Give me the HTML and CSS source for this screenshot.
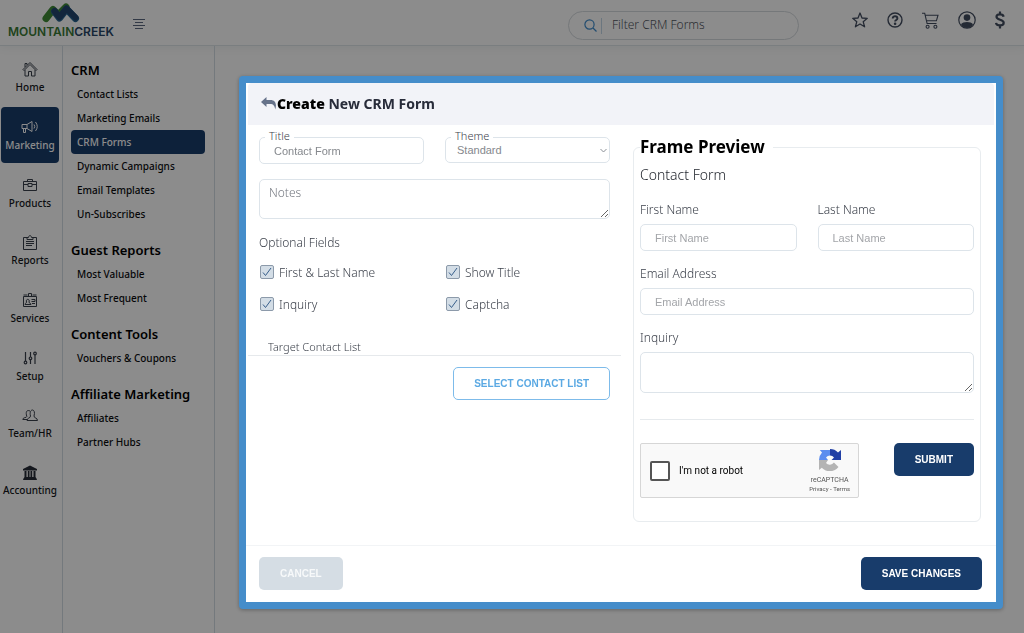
FILE: index.html
```
<!DOCTYPE html>
<html lang="en">
<head>
    <meta charset="UTF-8">
    <meta name="viewport" content="width=device-width, initial-scale=1.0">
    <title>CRM Forms - Mountain Creek</title>
    <link rel="stylesheet" href="styles.css">
</head>
<body>
    <header class="topbar">
        <a href="#" class="logo">
            <svg width="40" height="20" viewBox="0 0 40 20" fill="none" stroke-linecap="round" stroke-linejoin="round" stroke-width="7">
                <path d="M5 15.500L12 6.500l4 4" stroke="#3f8a36"/>
                <path d="M20 9l5-5" stroke="#3f8a36"/>
                <path d="M13.500 8.500l5 6.500 7-9 9 9.500" stroke="#27638f"/>
                <path d="M13.500 8l5 6 7-8.500 9 9" stroke="#23466e" stroke-width="6"/>
            </svg>
            <span class="logo-text"><span class="green">MOUNTAIN</span>CREEK</span>
        </a>
        <button type="button" class="menu-toggle" aria-label="Toggle menu">
            <svg width="12" height="10" viewBox="0 0 12 10" stroke="#5b6880" fill="none">
                <path d="M0 .5h12M2 3.500h8M0 6.500h12M2 9.500h8"/>
            </svg>
        </button>
        <form class="search">
            <svg width="13" height="13" viewBox="0 0 13 13" fill="none" stroke="#3e8ccc" stroke-width="1.2">
                <circle cx="5.500" cy="5.500" r="4.600"/><path d="M9 9l3.500 3.500"/>
            </svg>
            <input type="text" placeholder="Filter CRM Forms" aria-label="Filter CRM Forms">
        </form>
        <nav class="tools">
            <a href="#" aria-label="Favorites">
                <svg width="16" height="16" viewBox="0 0 16 16" fill="none" stroke="#434d60" stroke-width="1.3" stroke-linejoin="round"><path d="M8 1l2 5 5.300.3-4.100 3.400 1.400 5.100L8 12l-4.600 2.800 1.400-5.100L.7 6.300 6 6z"/></svg>
            </a>
            <a href="#" aria-label="Help">
                <svg width="16" height="16" viewBox="0 0 16 16" fill="none" stroke="#434d60" stroke-width="1.4"><circle cx="8" cy="8" r="7"/><path d="M5.700 6.500c0-3 4.700-2.900 4.700 0 0 1.500-2.300 1.500-2.300 3" stroke-width="1.900"/><circle cx="8.100" cy="11.800" r=".6" fill="#434d60"/></svg>
            </a>
            <a href="#" aria-label="Cart">
                <svg width="17" height="17" viewBox="0 0 17 17" fill="none" stroke="#434d60" stroke-width="1.1"><path d="M0 1.200h2.700l2.400 10.300h9.400M3.200 3.200h12.800l-1.600 5.600H4.600"/><circle cx="5.600" cy="14.700" r="1.500"/><circle cx="13.400" cy="14.700" r="1.500"/></svg>
            </a>
            <a href="#" aria-label="Account">
                <svg width="18" height="18" viewBox="0 0 18 18"><circle cx="9" cy="9" r="8.200" fill="none" stroke="#434d60" stroke-width="1.200"/><circle cx="9" cy="6.600" r="3.300" fill="#434d60"/><path d="M3 13.200c2-3 10-3 12 0-2.500 5-9.500 5-12 0z" fill="#434d60"/></svg>
            </a>
            <a href="#" aria-label="Billing">
                <svg width="10" height="18" viewBox="0 0 10 18" fill="none" stroke="#434d60" stroke-width="2.200"><path d="M8.600 5.700C8 2.500 1.500 2.700 1.500 5.800c0 3.500 7.200 2.400 7.200 5.900 0 3.600-7.200 3.600-7.700.2M5 .5v3M5 14.500v3"/></svg>
            </a>
        </nav>
    </header>

    <div class="layout">
        <nav class="rail">
            <a href="#">
                <svg width="16" height="16" viewBox="0 0 16 16" fill="none" stroke="#3a404c"><path d="M1 8.500l7-7 7 7-1 1-6-6-6 6zM3 9v6h3.500v-4.500h3V15H13V9M3 6V2.500h2V4"/></svg>
                Home
            </a>
            <a href="#" class="active">
                <svg width="18" height="16" viewBox="0 0 18 16" fill="none" stroke="#fff"><path d="M1 5.500h5l5-3v10l-5-3H1zM6 5.500v4M2.500 9.500v4h2v-4M13 5.500q1.500 2 0 4M14.500 3q3.500 4.500 0 9"/></svg>
                Marketing
            </a>
            <a href="#">
                <svg width="16" height="16" viewBox="0 0 16 16" fill="none" stroke="#3a404c"><path d="M1.500 4.500h13v9h-13zM5.500 4.500v-2h5v2M1.500 7.500H6M10 7.500h4.500M6 6.500h4v3H6z"/></svg>
                Products
            </a>
            <a href="#">
                <svg width="14" height="15" viewBox="0 0 14 15" fill="none" stroke="#3a404c"><path d="M4 2.500H.5v12h13v-12H10M4 4.500h6v-2H8.500C8.500 0 5.500 0 5.500 2.500H4zM3 6.500h8M3 8.500h8M3 10.500h6"/></svg>
                Reports
            </a>
            <a href="#">
                <svg width="16" height="16" viewBox="0 0 16 16" fill="none" stroke="#3a404c"><path d="M1.500 4.500h13v10h-13zM1.500 3h4M10.500 3h4M6.500 1.500h3v3h-3zM3 12.500h6c0-1.500-2-1-2-2.500 1.500-3-3.500-4-2.500 0 0 1.500-1.500 1-1.500 2.500zM9.500 7.500H13v2H9.500M10 11.500h3"/></svg>
                Services
            </a>
            <a href="#">
                <svg width="14" height="16" viewBox="0 0 14 16" fill="none" stroke="#3a404c" stroke-width="1.200"><path d="M2.500 2v9M7.500 2v5M7.500 9.500V14M12 5v9"/><circle cx="2.500" cy="12.500" r="1.300"/><circle cx="7.500" cy="8.300" r="1.300"/><circle cx="12" cy="3.500" r="1.300"/></svg>
                Setup
            </a>
            <a href="#">
                <svg width="16" height="15" viewBox="0 0 16 15" fill="none" stroke="#3a404c"><path d="M5 12.500h10.500c0-3-3.500-2-3.500-4.500 2.500-8-5.500-8-3.500 0 0 2.500-3.500 1.500-3.500 4.500zM8 3C4.500 1.500 3.500 4 4.800 8.500c0 1.500-4 .5-4 3H5"/></svg>
                Team/HR
            </a>
            <a href="#">
                <svg width="16" height="15" viewBox="0 0 16 15" fill="#252a35"><path d="M8 .5l7 3.500v1.500H1V4zM2.500 6h2v6h1.300V6h1.700v6h1V6h1.700v6h1.300V6h2v6l1 1.500.5 1.500H1l.5-1.500 1-1.500z"/></svg>
                Accounting
            </a>
        </nav>

        <nav class="subnav">
            <h3>CRM</h3>
            <ul>
                <li><a href="#">Contact Lists</a></li>
                <li><a href="#">Marketing Emails</a></li>
                <li><a href="#" class="active">CRM Forms</a></li>
                <li><a href="#">Dynamic Campaigns</a></li>
                <li><a href="#">Email Templates</a></li>
                <li><a href="#">Un-Subscribes</a></li>
            </ul>
            <h3>Guest Reports</h3>
            <ul>
                <li><a href="#">Most Valuable</a></li>
                <li><a href="#">Most Frequent</a></li>
            </ul>
            <h3>Content Tools</h3>
            <ul>
                <li><a href="#">Vouchers &amp; Coupons</a></li>
            </ul>
            <h3>Affiliate Marketing</h3>
            <ul>
                <li><a href="#">Affiliates</a></li>
                <li><a href="#">Partner Hubs</a></li>
            </ul>
        </nav>
    </div>

    <div class="overlay">
        <div class="modal" role="dialog" aria-labelledby="modalTitle">
            <div class="modal-header">
                <svg width="15" height="13" viewBox="0 0 15 13" fill="#66728a"><path d="M0 5L5.500 0v3h4c5 0 6.500 4 4.700 9.500C13.800 9 12.500 7 9 7H5.500v3z"/></svg>
                <h2 id="modalTitle"><b>Create</b> New CRM Form</h2>
            </div>

            <div class="modal-body">
                <form class="settings">
                    <div class="row">
                        <div class="outlined">
                            <label for="title">Title</label>
                            <input type="text" id="title" placeholder="Contact Form">
                        </div>
                        <div class="outlined">
                            <label for="theme">Theme</label>
                            <select id="theme"><option>Standard</option></select>
                            <svg class="chevron" width="7" height="5" viewBox="0 0 7 5" fill="none" stroke="#8a8f96"><path d="M.5 1l3 3 3-3"/></svg>
                        </div>
                    </div>
                    <textarea class="notes" placeholder="Notes" aria-label="Notes"></textarea>
                    <p class="group-title">Optional Fields</p>
                    <div class="row checks">
                        <label><input type="checkbox" checked>First &amp; Last Name</label>
                        <label><input type="checkbox" checked>Show Title</label>
                        <label><input type="checkbox" checked>Inquiry</label>
                        <label><input type="checkbox" checked>Captcha</label>
                    </div>
                    <p class="target">Target Contact List</p>
                    <button type="button" class="btn btn-outline">SELECT CONTACT LIST</button>
                </form>

                <form class="preview">
                    <fieldset>
                        <legend>Frame Preview</legend>
                        <h4>Contact Form</h4>
                        <div class="row">
                            <div class="field">
                                <label for="first">First Name</label>
                                <input type="text" id="first" placeholder="First Name">
                            </div>
                            <div class="field">
                                <label for="last">Last Name</label>
                                <input type="text" id="last" placeholder="Last Name">
                            </div>
                        </div>
                        <div class="field">
                            <label for="email">Email Address</label>
                            <input type="email" id="email" placeholder="Email Address">
                        </div>
                        <div class="field">
                            <label for="inquiry">Inquiry</label>
                            <textarea id="inquiry"></textarea>
                        </div>
                        <hr>
                        <div class="submit-row">
                            <div class="captcha">
                                <label><input type="checkbox">I'm not a robot</label>
                                <div class="captcha-brand">
                                    <svg width="22" height="22" viewBox="0 0 22 22">
                                        <path d="M0 11A11 11 0 0 1 3 3.400L.8 1H11v5.500A5 5 0 0 0 7 8.500L9 11z" fill="#5b8def"/>
                                        <path d="M11 0a11 11 0 0 1 8 3.400L22 1v10H12.500l2.500-2.600A5 5 0 0 0 11 6.500z" fill="#213fa5"/>
                                        <path d="M0 11v10l2.800-2.200A11 11 0 0 0 19.500 18l-4.600-4.500A5 5 0 0 1 7 14l2-3z" fill="#b4b4b4"/>
                                    </svg>
                                    <span>reCAPTCHA</span>
                                    <small><a href="#">Privacy</a> - <a href="#">Terms</a></small>
                                </div>
                            </div>
                            <button type="button" class="btn btn-primary">SUBMIT</button>
                        </div>
                    </fieldset>
                </form>
            </div>

            <div class="modal-footer">
                <button type="button" class="btn btn-muted">CANCEL</button>
                <button type="button" class="btn btn-primary">SAVE CHANGES</button>
            </div>
        </div>
    </div>
</body>
</html>
```
FILE: styles.css
```
* {
    box-sizing: border-box;
}

body {
    margin: 0;
    min-height: 100vh;
    display: flex;
    flex-direction: column;
    font-family: "Noto Sans", sans-serif;
    font-size: 12px;
    font-weight: 300;
    color: #3c414b;
    background: #fff;
}

h2, h3, h4, p, ul {
    margin: 0;
    padding: 0;
    list-style: none;
}

a {
    color: inherit;
    text-decoration: none;
}

svg {
    flex: none;
    display: block;
}

/* Top bar */
.topbar {
    height: 46px;
    padding: 0 19px 0 8px;
    display: flex;
    align-items: center;
    border-bottom: 1px solid #dfe5ea;
    box-shadow: 0 2px 8px rgba(60, 90, 90, 0.08);
}

.logo {
    display: flex;
    flex-direction: column;
    align-items: center;
    margin-bottom: 2px;
}

.logo-text {
    font: 600 12px/18px Inter, sans-serif;
    color: #274566;
}

.logo-text .green {
    color: #3a7a35;
}

.menu-toggle {
    margin: 3px 0 0 19px;
    padding: 0;
    border: 0;
    background: none;
}

.search {
    width: 231px;
    height: 29px;
    margin: 6px 53px 0 auto;
    padding: 0 15px;
    display: flex;
    align-items: center;
    border: 1px solid #d5dade;
    border-radius: 15px;
}

.search input {
    flex: 1;
    min-width: 0;
    height: 16px;
    margin-left: 4px;
    padding: 0 0 2px 10px;
    border: 0;
    border-left: 1px solid #c3d8e8;
    background: none;
    font: 300 12px/14px "Noto Sans", sans-serif;
}

.search input::placeholder {
    color: #50555d;
}

.tools {
    display: flex;
    align-items: center;
    gap: 19px;
    margin-bottom: 5px;
}

/* Side menus */
.layout {
    flex: 1;
    display: flex;
}

.rail {
    width: 63px;
    padding: 3px 3px 0 1px;
    border-right: 1px solid #d3dde4;
}

.rail a {
    display: flex;
    flex-direction: column;
    align-items: center;
    gap: 2px;
    margin-bottom: 2px;
    padding: 12px 0 10px;
    border-radius: 4px;
    font-size: 10px;
    font-weight: 500;
    line-height: 16px;
    color: #16181c;
}

.rail a.active,
.subnav a.active {
    background: #183c6b;
    color: #fff;
}

.subnav {
    width: 152px;
    padding: 0 9px 0 8px;
    border-right: 1px solid #d3dde4;
}

.subnav h3 {
    margin-top: 12px;
    font-size: 13px;
    font-weight: 600;
    line-height: 24px;
    color: #000;
}

.subnav a {
    display: block;
    padding-left: 6px;
    border-radius: 4px;
    font-size: 10px;
    font-weight: 500;
    line-height: 24px;
    color: #0c0d10;
}

/* Modal */
.overlay {
    position: fixed;
    inset: 0;
    padding: 76px 21px 24px 239px;
    background: rgba(0, 0, 0, 0.45);
}

.modal {
    border: 7px solid #458dca;
    border-radius: 4px;
    padding: 0 2px;
    background: #fff;
    box-shadow: 0 1px 4px rgba(0, 0, 0, 0.3);
}

.modal-header {
    display: flex;
    align-items: center;
    gap: 1px;
    height: 42px;
    padding: 0 13px 2px;
    border-radius: 4px 4px 0 0;
    background: #f2f3f8;
}

.modal-header h2 {
    font-size: 14px;
    font-weight: 700;
    color: #282c3a;
}

.modal-header b {
    color: #000;
}

.modal-body {
    display: grid;
    grid-template-columns: 1fr 1fr;
}

.row {
    display: grid;
    grid-template-columns: 1fr 1fr;
    column-gap: 21px;
}

input[type="text"],
input[type="email"],
select,
textarea {
    width: 100%;
}

.outlined input,
.outlined select,
.notes,
.field input,
.field textarea {
    display: block;
    height: 27px;
    padding: 0 14px;
    border: 1px solid #dde4ea;
    border-radius: 5px;
    background: #fff;
    font: 11px "Liberation Sans", sans-serif;
    color: #85888d;
}

.outlined input::placeholder {
    color: #85888d;
}

.field input::placeholder {
    color: #a3a5a9;
}

/* Left column */
.settings {
    padding-top: 12px;
}

.settings .row,
.group-title {
    padding: 0 11px;
}

.outlined {
    position: relative;
}

.outlined label {
    position: absolute;
    top: -9px;
    left: 6px;
    padding: 0 4px;
    background: #fff;
    font-size: 11px;
    line-height: 16px;
}

.outlined select {
    height: 26px;
    padding: 0 11px;
    appearance: none;
}

.chevron {
    position: absolute;
    top: 11px;
    right: 3px;
}

.settings .notes {
    width: auto;
    min-width: calc(100% - 22px);
    height: 40px;
    margin: 15px 11px 0;
    padding: 4px 9px;
    font: 300 12px/18px "Noto Sans", sans-serif;
}

.notes::placeholder {
    color: #767a82;
}

.group-title {
    margin-top: 14px;
    line-height: 20px;
}

.settings .checks {
    margin-top: 10px;
    row-gap: 12px;
}

.checks label {
    display: flex;
    align-items: center;
    gap: 5px;
    line-height: 20px;
}

.checks input {
    appearance: none;
    width: 14px;
    height: 14px;
    margin: 0 0 2px 1px;
    border: 1px solid #8c9aaa;
    border-radius: 2px;
    background: #d3dde6 url("data:image/svg+xml,%3Csvg xmlns='http://www.w3.org/2000/svg' viewBox='0 0 12 12' fill='none' stroke='%23385f8c'%3E%3Cpath d='M2 6.500l2.500 3L10 2'/%3E%3C/svg%3E");
}

.target {
    margin-top: 24px;
    padding-left: 20px;
    border-bottom: 1px solid #e6e9ec;
    font-size: 11px;
    line-height: 16px;
}

.btn {
    height: 33px;
    padding: 0 21px;
    border: 0;
    border-radius: 5px;
    font: 700 10px "Liberation Sans", sans-serif;
}

.btn-outline {
    display: block;
    margin: 11px 11px 0 auto;
    padding: 0 20px;
    border: 1px solid #7dbbea;
    background: #fff;
    color: #5ba9e3;
}

.btn-primary {
    background: #183c6b;
    color: #fff;
}

.btn-muted {
    background: #d5dde4;
    color: #f7f9fa;
}

/* Right column */
.preview {
    padding: 10px 13px 23px 12px;
}

fieldset {
    min-width: 0;
    margin: 0;
    padding: 6px 6px 23px;
    border: 1px solid #e8ecef;
    border-radius: 6px;
}

legend {
    padding: 0 8px 0 0;
    font-size: 17px;
    font-weight: 700;
    line-height: 24px;
    color: #000;
}

.preview h4 {
    margin-bottom: 16px;
    font-size: 14px;
    font-weight: 300;
    line-height: 20px;
    color: #1d2129;
}

.field {
    margin-bottom: 14px;
}

.field label {
    display: block;
    margin-bottom: 5px;
    line-height: 18px;
}

.field textarea {
    height: 41px;
}

hr {
    margin: 26px 0 23px;
    border: 0;
    border-top: 1px solid #e6eaed;
}

.submit-row {
    display: flex;
    justify-content: space-between;
    align-items: flex-start;
}

.captcha {
    width: 219px;
    height: 55px;
    padding: 0 8px 0 9px;
    display: flex;
    justify-content: space-between;
    align-items: center;
    border: 1px solid #d6d6d6;
    border-radius: 2px;
    background: #f9f9f9;
    font-family: Roboto, sans-serif;
    font-weight: 400;
    color: #000;
}

.captcha label {
    display: flex;
    align-items: center;
    gap: 9px;
    font-size: 10px;
}

.captcha input {
    appearance: none;
    width: 20px;
    height: 20px;
    margin: 0;
    border: 2px solid #555;
    border-radius: 2px;
    background: #fff;
}

.captcha-brand {
    display: flex;
    flex-direction: column;
    align-items: center;
    font-size: 7px;
    line-height: 10px;
    color: #555;
}

.captcha-brand span {
    margin-top: 4px;
}

.captcha-brand small {
    font-size: 6px;
    line-height: 8px;
}

.modal-footer {
    display: flex;
    justify-content: space-between;
    margin: 0 -2px;
    padding: 11px 14px 12px 13px;
    border-top: 1px solid #f2f4f6;
}
```
